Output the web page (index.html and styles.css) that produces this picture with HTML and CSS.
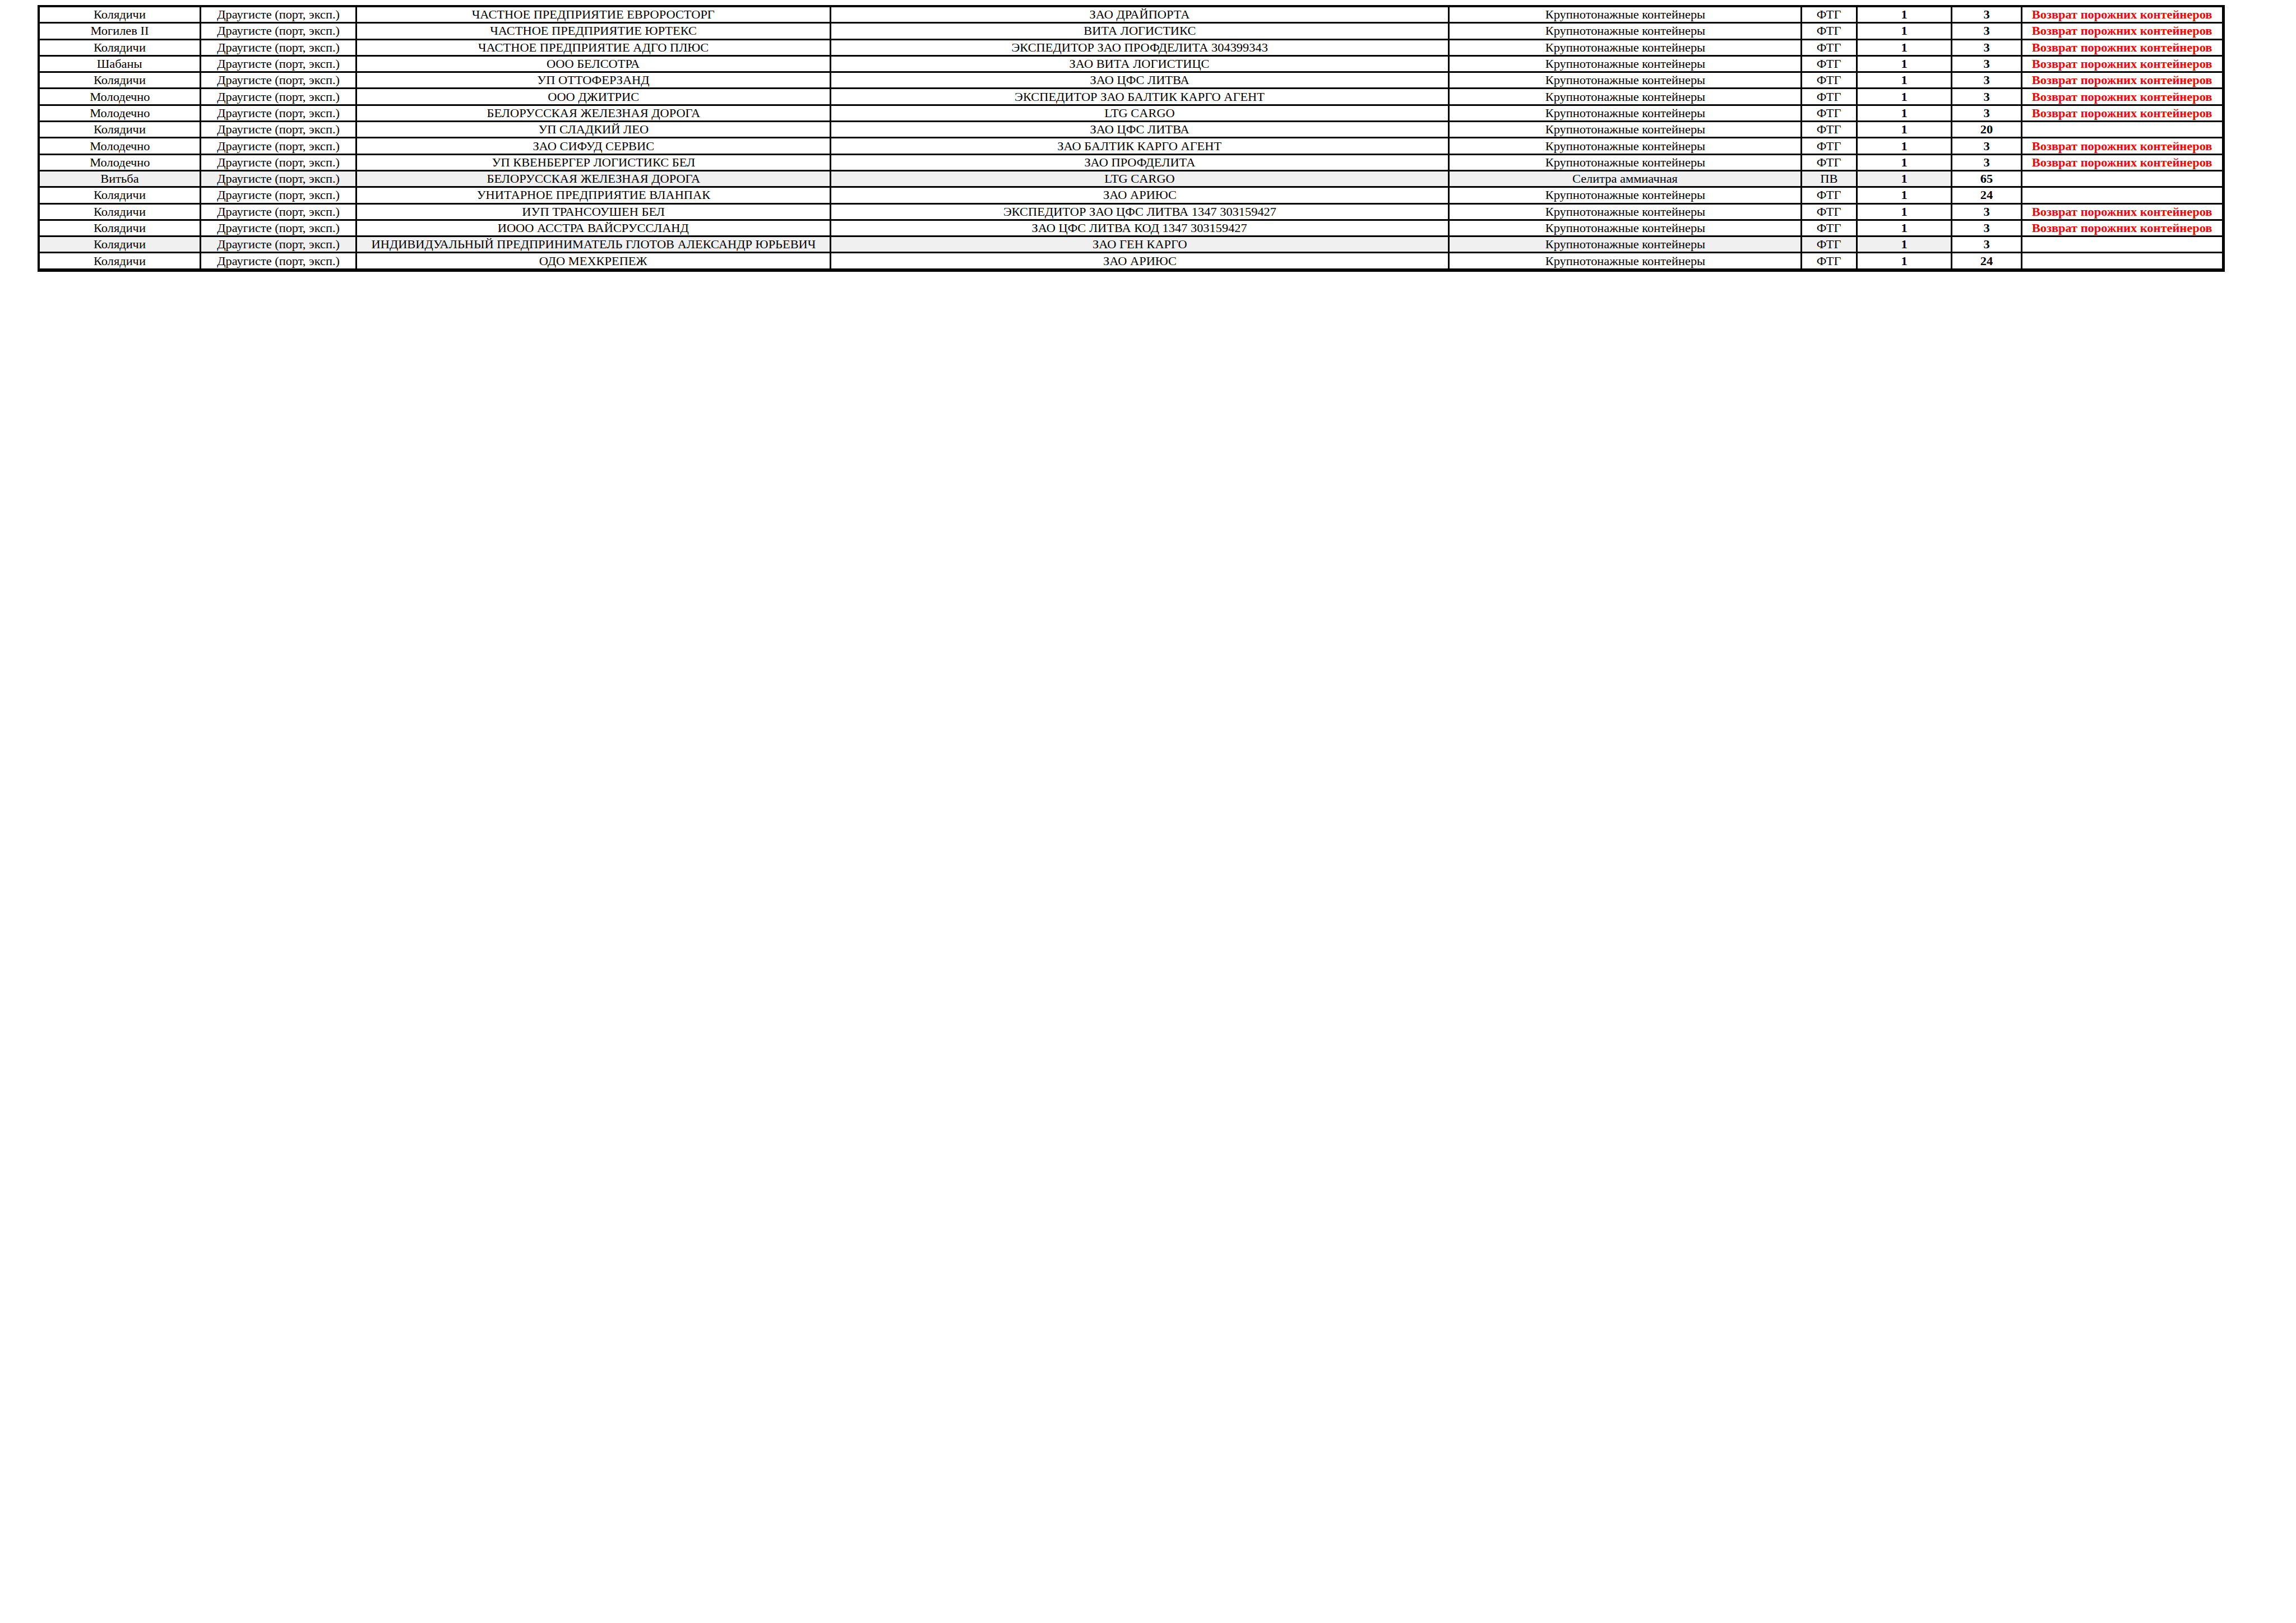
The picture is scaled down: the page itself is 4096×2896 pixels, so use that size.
FILE: index.html
```html
<!DOCTYPE html>
<html lang="ru">
<head>
<meta charset="utf-8">
<title>Отправки</title>
<link rel="stylesheet" href="styles.css">
</head>
<body>
<div class="page">
<table class="grid">
<colgroup>
<col class="c1"><col class="c2"><col class="c3"><col class="c4"><col class="c5"><col class="c6"><col class="c7"><col class="c8"><col class="c9">
</colgroup>
<tbody>
<tr><td><span class="t">Колядичи</span></td><td><span class="t">Драугисте (порт, эксп.)</span></td><td><span class="t">ЧАСТНОЕ ПРЕДПРИЯТИЕ ЕВРОРОСТОРГ</span></td><td><span class="t">ЗАО ДРАЙПОРТА</span></td><td><span class="t">Крупнотонажные контейнеры</span></td><td><span class="t">ФТГ</span></td><td class="b"><span class="t">1</span></td><td class="b"><span class="t">3</span></td><td class="note"><span class="t">Возврат порожних контейнеров</span></td></tr>
<tr><td><span class="t">Могилев II</span></td><td><span class="t">Драугисте (порт, эксп.)</span></td><td><span class="t">ЧАСТНОЕ ПРЕДПРИЯТИЕ ЮРТЕКС</span></td><td><span class="t">ВИТА ЛОГИСТИКС</span></td><td><span class="t">Крупнотонажные контейнеры</span></td><td><span class="t">ФТГ</span></td><td class="b"><span class="t">1</span></td><td class="b"><span class="t">3</span></td><td class="note"><span class="t">Возврат порожних контейнеров</span></td></tr>
<tr><td><span class="t">Колядичи</span></td><td><span class="t">Драугисте (порт, эксп.)</span></td><td><span class="t">ЧАСТНОЕ ПРЕДПРИЯТИЕ АДГО ПЛЮС</span></td><td><span class="t">ЭКСПЕДИТОР ЗАО ПРОФДЕЛИТА 304399343</span></td><td><span class="t">Крупнотонажные контейнеры</span></td><td><span class="t">ФТГ</span></td><td class="b"><span class="t">1</span></td><td class="b"><span class="t">3</span></td><td class="note"><span class="t">Возврат порожних контейнеров</span></td></tr>
<tr><td><span class="t">Шабаны</span></td><td><span class="t">Драугисте (порт, эксп.)</span></td><td><span class="t">ООО БЕЛСОТРА</span></td><td><span class="t">ЗАО ВИТА ЛОГИСТИЦС</span></td><td><span class="t">Крупнотонажные контейнеры</span></td><td><span class="t">ФТГ</span></td><td class="b"><span class="t">1</span></td><td class="b"><span class="t">3</span></td><td class="note"><span class="t">Возврат порожних контейнеров</span></td></tr>
<tr><td><span class="t">Колядичи</span></td><td><span class="t">Драугисте (порт, эксп.)</span></td><td><span class="t">УП ОТТОФЕРЗАНД</span></td><td><span class="t">ЗАО ЦФС ЛИТВА</span></td><td><span class="t">Крупнотонажные контейнеры</span></td><td><span class="t">ФТГ</span></td><td class="b"><span class="t">1</span></td><td class="b"><span class="t">3</span></td><td class="note"><span class="t">Возврат порожних контейнеров</span></td></tr>
<tr><td><span class="t">Молодечно</span></td><td><span class="t">Драугисте (порт, эксп.)</span></td><td><span class="t">ООО ДЖИТРИС</span></td><td><span class="t">ЭКСПЕДИТОР ЗАО БАЛТИК КАРГО АГЕНТ</span></td><td><span class="t">Крупнотонажные контейнеры</span></td><td><span class="t">ФТГ</span></td><td class="b"><span class="t">1</span></td><td class="b"><span class="t">3</span></td><td class="note"><span class="t">Возврат порожних контейнеров</span></td></tr>
<tr><td><span class="t">Молодечно</span></td><td><span class="t">Драугисте (порт, эксп.)</span></td><td><span class="t">БЕЛОРУССКАЯ ЖЕЛЕЗНАЯ ДОРОГА</span></td><td><span class="t">LTG CARGO</span></td><td><span class="t">Крупнотонажные контейнеры</span></td><td><span class="t">ФТГ</span></td><td class="b"><span class="t">1</span></td><td class="b"><span class="t">3</span></td><td class="note"><span class="t">Возврат порожних контейнеров</span></td></tr>
<tr><td><span class="t">Колядичи</span></td><td><span class="t">Драугисте (порт, эксп.)</span></td><td><span class="t">УП СЛАДКИЙ ЛЕО</span></td><td><span class="t">ЗАО ЦФС ЛИТВА</span></td><td><span class="t">Крупнотонажные контейнеры</span></td><td><span class="t">ФТГ</span></td><td class="b"><span class="t">1</span></td><td class="b"><span class="t">20</span></td><td class="note"></td></tr>
<tr><td><span class="t">Молодечно</span></td><td><span class="t">Драугисте (порт, эксп.)</span></td><td><span class="t">ЗАО СИФУД СЕРВИС</span></td><td><span class="t">ЗАО БАЛТИК КАРГО АГЕНТ</span></td><td><span class="t">Крупнотонажные контейнеры</span></td><td><span class="t">ФТГ</span></td><td class="b"><span class="t">1</span></td><td class="b"><span class="t">3</span></td><td class="note"><span class="t">Возврат порожних контейнеров</span></td></tr>
<tr><td><span class="t">Молодечно</span></td><td><span class="t">Драугисте (порт, эксп.)</span></td><td><span class="t">УП КВЕНБЕРГЕР ЛОГИСТИКС БЕЛ</span></td><td><span class="t">ЗАО ПРОФДЕЛИТА</span></td><td><span class="t">Крупнотонажные контейнеры</span></td><td><span class="t">ФТГ</span></td><td class="b"><span class="t">1</span></td><td class="b"><span class="t">3</span></td><td class="note"><span class="t">Возврат порожних контейнеров</span></td></tr>
<tr class="shade"><td><span class="t">Витьба</span></td><td><span class="t">Драугисте (порт, эксп.)</span></td><td><span class="t">БЕЛОРУССКАЯ ЖЕЛЕЗНАЯ ДОРОГА</span></td><td><span class="t">LTG CARGO</span></td><td><span class="t">Селитра аммиачная</span></td><td><span class="t">ПВ</span></td><td class="b"><span class="t">1</span></td><td class="b"><span class="t">65</span></td><td class="note"></td></tr>
<tr><td><span class="t">Колядичи</span></td><td><span class="t">Драугисте (порт, эксп.)</span></td><td><span class="t">УНИТАРНОЕ ПРЕДПРИЯТИЕ ВЛАНПАК</span></td><td><span class="t">ЗАО АРИЮС</span></td><td><span class="t">Крупнотонажные контейнеры</span></td><td><span class="t">ФТГ</span></td><td class="b"><span class="t">1</span></td><td class="b"><span class="t">24</span></td><td class="note"></td></tr>
<tr><td><span class="t">Колядичи</span></td><td><span class="t">Драугисте (порт, эксп.)</span></td><td><span class="t">ИУП ТРАНСОУШЕН БЕЛ</span></td><td><span class="t">ЭКСПЕДИТОР ЗАО ЦФС ЛИТВА 1347 303159427</span></td><td><span class="t">Крупнотонажные контейнеры</span></td><td><span class="t">ФТГ</span></td><td class="b"><span class="t">1</span></td><td class="b"><span class="t">3</span></td><td class="note"><span class="t">Возврат порожних контейнеров</span></td></tr>
<tr><td><span class="t">Колядичи</span></td><td><span class="t">Драугисте (порт, эксп.)</span></td><td><span class="t">ИООО АССТРА ВАЙСРУССЛАНД</span></td><td><span class="t">ЗАО ЦФС ЛИТВА КОД 1347 303159427</span></td><td><span class="t">Крупнотонажные контейнеры</span></td><td><span class="t">ФТГ</span></td><td class="b"><span class="t">1</span></td><td class="b"><span class="t">3</span></td><td class="note"><span class="t">Возврат порожних контейнеров</span></td></tr>
<tr class="shade"><td><span class="t">Колядичи</span></td><td><span class="t">Драугисте (порт, эксп.)</span></td><td><span class="t">ИНДИВИДУАЛЬНЫЙ ПРЕДПРИНИМАТЕЛЬ ГЛОТОВ АЛЕКСАНДР ЮРЬЕВИЧ</span></td><td><span class="t">ЗАО ГЕН КАРГО</span></td><td><span class="t">Крупнотонажные контейнеры</span></td><td><span class="t">ФТГ</span></td><td class="b"><span class="t">1</span></td><td class="b"><span class="t">3</span></td><td class="note"></td></tr>
<tr><td><span class="t">Колядичи</span></td><td><span class="t">Драугисте (порт, эксп.)</span></td><td><span class="t">ОДО МЕХКРЕПЕЖ</span></td><td><span class="t">ЗАО АРИЮС</span></td><td><span class="t">Крупнотонажные контейнеры</span></td><td><span class="t">ФТГ</span></td><td class="b"><span class="t">1</span></td><td class="b"><span class="t">24</span></td><td class="note"></td></tr>
</tbody>
</table>
</div>
</body>
</html>
```

FILE: styles.css
```css
html, body {
  margin: 0;
  padding: 0;
  background: #ffffff;
}

.page {
  padding: 9px 0 0 67px;
  font-family: "Liberation Serif", "Times New Roman", serif;
  color: #000000;
}

.grid {
  table-layout: fixed;
  border-collapse: separate;
  border-spacing: 3px;
  background: #000000;
  border-style: solid;
  border-color: #000000;
  border-width: 1px 2px 3px 1px;
  width: 3899px;
}

.c1 { width: 285px; }
.c2 { width: 275px; }
.c3 { width: 843px; }
.c4 { width: 1100px; }
.c5 { width: 626px; }
.c6 { width: 96px; }
.c7 { width: 166px; }
.c8 { width: 122px; }
.c9 { width: 356px; }

.grid td {
  background: #ffffff;
  height: 26.3px;
  padding: 0;
  text-align: center;
  vertical-align: middle;
  font-size: 20px;
  line-height: 22px;
  white-space: nowrap;
  overflow: hidden;
}

.grid .t {
  display: inline-block;
  transform: scaleX(1.12);
  transform-origin: 50% 50%;
}

.shade td {
  background: #f0f0f0;
}

.shade td.b:nth-child(8),
.shade td.note {
  background: #ffffff;
}

.grid td.b {
  font-weight: bold;
}

.grid td.note {
  color: #ff0000;
  font-weight: bold;
}
```
